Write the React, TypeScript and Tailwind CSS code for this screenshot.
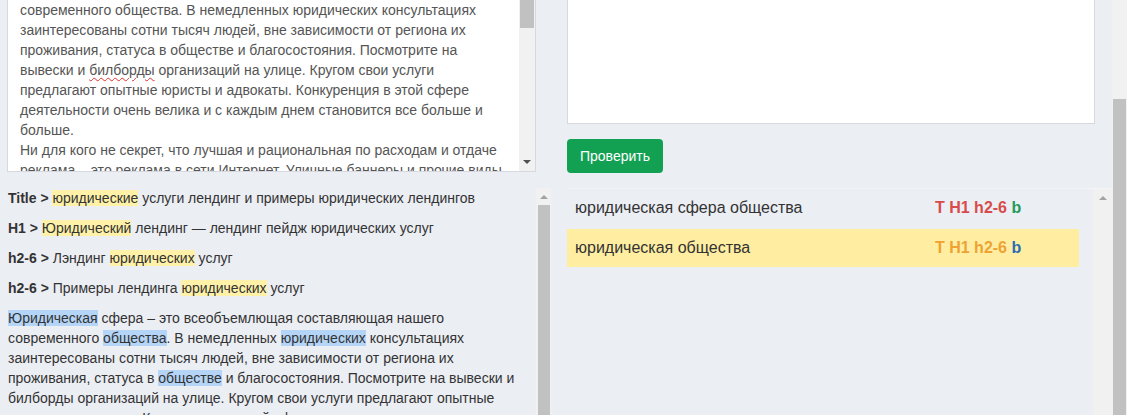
import React from "react";

const textLines = [
  "современного общества. В немедленных юридических консультациях",
  "заинтересованы сотни тысяч людей, вне зависимости от региона их",
  "проживания, статуса в обществе и благосостояния. Посмотрите на",
  null,
  "предлагают опытные юристы и адвокаты. Конкуренция в этой сфере",
  "деятельности очень велика и с каждым днем становится все больше и",
  "больше.",
  "Ни для кого не секрет, что лучшая и рациональная по расходам и отдаче",
  "реклама – это реклама в сети Интернет. Уличные баннеры и прочие виды",
];

function Y({ children }: { children: React.ReactNode }) {
  return <span className="bg-[#fff2a8]">{children}</span>;
}

function B({ children }: { children: React.ReactNode }) {
  return <span className="bg-[#b5d5f8]">{children}</span>;
}

function ArrowUp() {
  return <div className="w-0 h-0 border-x-[4px] border-x-transparent border-b-[4px] border-b-[#a3a3a3]" />;
}

function ArrowDown() {
  return <div className="w-0 h-0 border-x-[4px] border-x-transparent border-t-[4px] border-t-[#505050]" />;
}

const results = [
  { phrase: "юридическая сфера общества", active: false },
  { phrase: "юридическая общества", active: true },
];

export default function App() {
  return (
    <div className="h-[415px] w-[1127px] overflow-hidden flex bg-[#ebeef3] text-[14px] leading-[20px] font-['Liberation_Sans',Arial,sans-serif]">
      {/* left column */}
      <div className="w-[551px] shrink-0 flex flex-col">
        <div className="ml-[7px] w-[529px] h-[172px] flex bg-white border-x border-b border-[#d5d9df] overflow-hidden">
          <div className="flex-1 pl-[12px] text-[#555] whitespace-nowrap">
            {textLines.map((l, i) =>
              l === null ? (
                <div key={i}>
                  вывески и{" "}
                  <span className="underline decoration-wavy decoration-[#e03030] decoration-1 underline-offset-2">
                    билборды
                  </span>{" "}
                  организаций на улице. Кругом свои услуги
                </div>
              ) : (
                <div key={i}>{l}</div>
              )
            )}
          </div>
          <div className="w-[16px] bg-[#f1f1f1] flex flex-col items-center justify-between pb-[7px]">
            <div className="w-[14px] h-[28px] bg-[#c1c1c1]" />
            <ArrowDown />
          </div>
        </div>

        <div className="mt-4 flex-1 flex min-h-0">
          <div className="flex-1 pl-2 text-[#333] whitespace-nowrap overflow-hidden">
            <div className="mb-[10px]">
              <b>Title &gt;</b> <Y>юридические</Y> услуги лендинг и примеры юридических лендингов
            </div>
            <div className="mb-[10px]">
              <b>H1 &gt;</b> <Y>Юридический</Y> лендинг — лендинг пейдж юридических услуг
            </div>
            <div className="mb-[10px]">
              <b>h2-6 &gt;</b> Лэндинг <Y>юридических</Y> услуг
            </div>
            <div className="mb-[10px]">
              <b>h2-6 &gt;</b> Примеры лендинга <Y>юридических</Y> услуг
            </div>
            <div>
              <B>Юридическая</B> сфера – это всеобъемлющая составляющая нашего
              <br />
              современного <B>общества</B>. В немедленных <B>юридических</B> консультациях
              <br />
              заинтересованы сотни тысяч людей, вне зависимости от региона их
              <br />
              проживания, статуса в <B>обществе</B> и благосостояния. Посмотрите на вывески и
              <br />
              билборды организаций на улице. Кругом свои услуги предлагают опытные
              <br />
              юристы и адвокаты. Конкуренция в этой сфере деятельности очень велика и с
            </div>
          </div>
          <div className="w-[15px] bg-[#f1f1f1] flex flex-col items-center pt-[7px]">
            <ArrowUp />
            <div className="mt-[6px] w-[12px] flex-1 bg-[#c1c1c1]" />
          </div>
        </div>
      </div>

      {/* right column */}
      <div className="ml-4 flex-1 flex flex-col">
        <div className="w-[528px] h-[124px] bg-white border-x border-b border-[#d5d9df]" />
        <button className="mt-[15px] w-[96px] h-[34px] rounded-[4px] bg-[#12a152] text-white text-[14px] self-start">
          Проверить
        </button>
        <div className="mt-[15px] flex-1 flex border-t border-[#f3f5f8]">
          <div className="flex-1 pr-[14px] flex flex-col gap-[2px] text-[16px] leading-[22px]">
            {results.map((r) => (
              <div
                key={r.phrase}
                className={`grid grid-cols-[360px_1fr] px-2 py-2 ${r.active ? "bg-[#ffeea1]" : ""}`}
              >
                <span className="text-[#333]">{r.phrase}</span>
                <span className="font-bold">
                  <span className={r.active ? "text-[#eea233]" : "text-[#d84b4b]"}>T H1 h2-6 </span>
                  <span className={r.active ? "text-[#2a6db3]" : "text-[#1e9c5c]"}>b</span>
                </span>
              </div>
            ))}
          </div>
          <div className="w-[19px] bg-[#f1f1f1] flex flex-col items-center pt-[7px]">
            <ArrowUp />
          </div>
        </div>
      </div>

      {/* page scrollbar */}
      <div className="w-[15px] shrink-0 bg-[#f1f1f1] flex flex-col items-center pt-[99px]">
        <div className="w-[13px] flex-1 bg-[#c1c1c1]" />
      </div>
    </div>
  );
}
